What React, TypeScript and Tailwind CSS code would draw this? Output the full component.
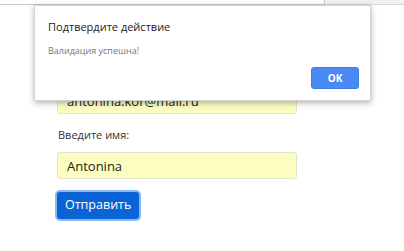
export default function App() {
  return (
    <div className="relative h-[251px] w-[404px] overflow-hidden bg-white font-['Open_Sans','Noto_Sans',sans-serif]">
      {/* browser chrome strip */}
      <div className="flex h-[5px]">
        <div className="w-[325px] border-b border-r border-[#c8c8c8] bg-white" />
        <div className="flex-1 border-b border-[#d8d8d8] bg-[#f2f2f2]" />
      </div>

      {/* page form */}
      <div className="flex flex-col pl-[57px] pt-[82px]">
        <input
          readOnly
          value="antonina.kor@mail.ru"
          className="h-[27px] w-[240px] rounded-[3px] border border-[#e4e4c8] bg-[#fcfdc0] px-[9px] text-[13px] text-[#222] outline-none"
        />
        <label className="mt-[12px] pl-px text-[11px] leading-[18px] text-[#333]">Введите имя:</label>
        <input
          readOnly
          value="Antonina"
          className="mt-[8px] h-[27px] w-[240px] rounded-[3px] border border-[#e4e4c8] bg-[#fcfdc0] px-[9px] text-[13px] text-[#222] outline-none"
        />
        <div className="mt-[11px] -ml-[2px]">
          <button className="h-[31px] rounded-[5px] border-2 border-[#8ab8f2] bg-[#0a64d6] px-[8px] text-[12.5px] font-medium text-white">
            Отправить
          </button>
        </div>
      </div>

      {/* alert dialog */}
      <div className="absolute left-[34px] top-[5px] h-[96px] w-[337px] border border-[#d4d4d4] bg-white shadow-[0_2px_6px_rgba(0,0,0,0.3)]">
        <div className="pl-[13px] pt-[13px] text-[11px] leading-[16px] text-[#222]">Подтвердите действие</div>
        <div className="pl-[13px] pt-[9px] text-[9px] leading-[13px] text-[#777]">Валидация успешна!</div>
        <div className="flex justify-end pr-[11px] pt-[10px]">
          <button className="h-[22px] w-[48px] rounded-[3px] border border-[#3b7de0] bg-[#4a8af4] text-[10px] font-bold text-white">
            OK
          </button>
        </div>
      </div>
    </div>
  )
}
